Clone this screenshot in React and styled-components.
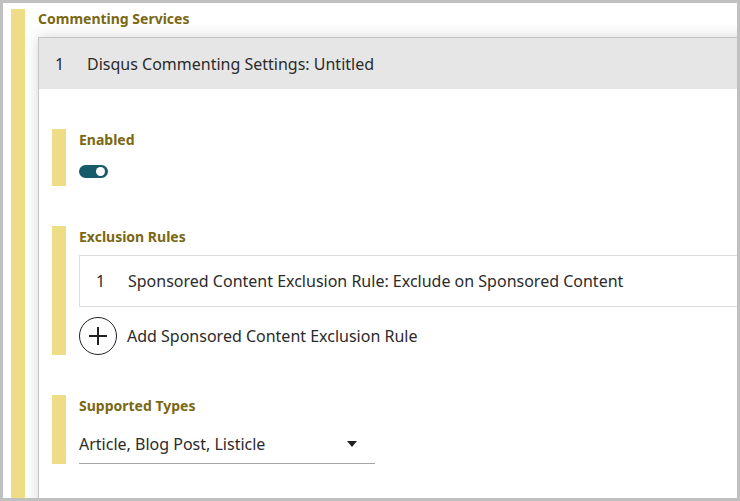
import styled, { createGlobalStyle } from "styled-components";

const GlobalStyle = createGlobalStyle`
	html, body {
		margin: 0;
		padding: 0;
		background: #ffffff;
	}
	* {
		box-sizing: border-box;
	}
`;

const Frame = styled.div`
	width: 740px;
	height: 501px;
	border: 3px solid #c0c0c0;
	background: #ffffff;
	overflow: hidden;
	padding: 6px 0 0 8px;
	font-family: "Noto Sans", "Open Sans", sans-serif;
	color: #222;
`;

const Field = styled.div`
	display: flex;
	align-items: stretch;
	min-height: ${(p) => p.$minHeight || "auto"};
`;

const Bar = styled.div`
	width: 14px;
	flex-shrink: 0;
	background: #efdc86;
`;

const FieldBody = styled.div`
	flex: 1;
	min-width: 0;
	padding-left: 13px;
`;

const Label = styled.div`
	font-size: 14px;
	font-weight: 700;
	line-height: 18px;
	color: #7a6813;
	padding-top: ${(p) => p.$top || "2px"};
`;

const Panel = styled.div`
	margin-top: 9px;
	margin-right: -30px;
	border: 1px solid #c4c4c4;
	border-right: none;
	box-shadow: 0 0 14px rgba(0, 0, 0, 0.16);
	background: #fff;
	height: 600px;
`;

const PanelHeader = styled.div`
	height: 51px;
	background: #e6e6e6;
	display: flex;
	align-items: center;
	padding-left: 16px;
	font-size: 16px;
	line-height: 20px;
	color: #2b2b2b;
`;

const Index = styled.span`
	width: 32px;
	flex-shrink: 0;
`;

const PanelBody = styled.div`
	padding: 40px 0 0 13px;
	display: flex;
	flex-direction: column;
	gap: 40px;
`;

const Toggle = styled.div`
	margin-top: 16px;
	width: 29px;
	height: 13px;
	border-radius: 7px;
	background: #175a6a;
	position: relative;
	margin-bottom: 8px;
	&::after {
		content: "";
		position: absolute;
		right: 3px;
		top: 2px;
		width: 9px;
		height: 9px;
		border-radius: 50%;
		background: #fff;
	}
`;

const RuleRow = styled.div`
	margin-top: 9px;
	height: 52px;
	border: 1px solid #dcdcdc;
	border-right: none;
	display: flex;
	align-items: center;
	padding-left: 16px;
	font-size: 16px;
	line-height: 20px;
	color: #2b2b2b;
`;

const AddRow = styled.button`
	display: flex;
	align-items: center;
	gap: 10px;
	margin-top: 10px;
	padding: 0;
	border: none;
	background: none;
	font-family: inherit;
	font-size: 16px;
	line-height: 20px;
	color: #2b2b2b;
	cursor: pointer;
`;

const Circle = styled.span`
	width: 38px;
	height: 38px;
	border: 1.5px solid #222;
	border-radius: 50%;
	display: flex;
	align-items: center;
	justify-content: center;
`;

const Select = styled.div`
	margin-top: 11px;
	width: 296px;
	height: 38px;
	border-bottom: 1px solid #a6a6a6;
	display: flex;
	align-items: center;
	justify-content: space-between;
	padding-right: 18px;
	padding-bottom: 1px;
	font-size: 16px;
	line-height: 20px;
	color: #2b2b2b;
`;

const Caret = styled.span`
	width: 0;
	height: 0;
	border-left: 5.5px solid transparent;
	border-right: 5.5px solid transparent;
	border-top: 6px solid #222;
`;

const App = () => {
	return (
		<>
			<GlobalStyle />
			<Frame>
				<Field $minHeight="600px">
					<Bar />
					<FieldBody>
						<Label $top="1px">Commenting Services</Label>
						<Panel>
							<PanelHeader>
								<Index>1</Index>
								Disqus Commenting Settings: Untitled
							</PanelHeader>
							<PanelBody>
								<Field>
									<Bar />
									<FieldBody>
										<Label>Enabled</Label>
										<Toggle />
									</FieldBody>
								</Field>
								<Field>
									<Bar />
									<FieldBody>
										<Label>Exclusion Rules</Label>
										<RuleRow>
											<Index>1</Index>
											Sponsored Content Exclusion Rule: Exclude on Sponsored Content
										</RuleRow>
										<AddRow>
											<Circle>
												<svg width="20" height="20" viewBox="0 0 20 20">
													<path d="M10 1v18M1 10h18" stroke="#222" strokeWidth="2" fill="none" />
												</svg>
											</Circle>
											Add Sponsored Content Exclusion Rule
										</AddRow>
									</FieldBody>
								</Field>
								<Field>
									<Bar />
									<FieldBody>
										<Label>Supported Types</Label>
										<Select>
											<span>Article, Blog Post, Listicle</span>
											<Caret />
										</Select>
									</FieldBody>
								</Field>
							</PanelBody>
						</Panel>
					</FieldBody>
				</Field>
			</Frame>
		</>
	);
};

export default App;
